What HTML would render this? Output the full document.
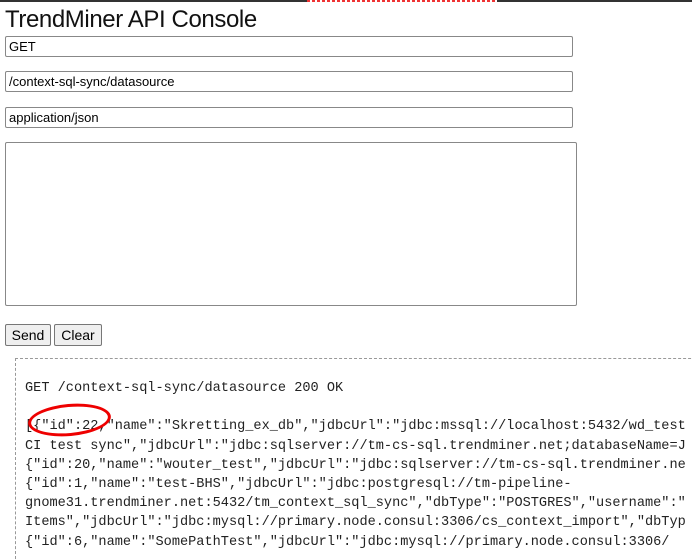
<!DOCTYPE html>
<html><head><style>
body{margin:0;width:692px;height:534px;overflow:hidden;background:#fff;font-family:"Liberation Sans",sans-serif;position:relative}
.bar{position:absolute;left:0;top:0;width:692px;height:2px;background:#333}
.red{position:absolute;left:307px;top:0;width:190px;height:2px;background:repeating-linear-gradient(90deg,#e33 0 3px,#fff 3px 5px)}
h1{position:absolute;left:5px;top:6px;margin:0;font-size:24px;font-weight:normal;color:#111;letter-spacing:-0.4px}
.in{position:absolute;left:5px;width:563px;height:19px;border:1px solid #888;border-radius:2px;font-size:13px;line-height:19px;padding-left:3px;box-sizing:content-box;color:#000}
.ta{position:absolute;left:5px;top:142px;width:570px;height:162px;border:1px solid #888;border-radius:2px}
.btn{position:absolute;top:324px;height:20px;border:1px solid #777;border-radius:2px;background:#efefef;font-size:14px;line-height:20px;text-align:center}
.out{position:absolute;left:15px;top:358px;width:700px;height:200px;border-left:1px dashed #999;border-top:1px dashed #999}
pre{position:absolute;left:25px;top:379px;margin:0;font-family:"Liberation Mono",monospace;font-size:13.6px;line-height:19.2px;color:#222;white-space:pre}
.ell{position:absolute;left:28px;top:404px;width:77px;height:26px;border:3px solid #e00;border-radius:50%;transform:rotate(-5deg)}
</style></head><body>
<div class="bar"></div><div class="red"></div>
<h1>TrendMiner API Console</h1>
<div class="in" style="top:36px">GET</div>
<div class="in" style="top:71px">/context-sql-sync/datasource</div>
<div class="in" style="top:107px">application/json</div>
<div class="ta"></div>
<div class="btn" style="left:5px;width:44px">Send</div>
<div class="btn" style="left:54px;width:46px">Clear</div>
<div class="out"></div>
<pre>GET /context-sql-sync/datasource 200 OK

[{"id":22,"name":"Skretting_ex_db","jdbcUrl":"jdbc:mssql://localhost:5432/wd_test
CI test sync","jdbcUrl":"jdbc:sqlserver://tm-cs-sql.trendminer.net;databaseName=J
{"id":20,"name":"wouter_test","jdbcUrl":"jdbc:sqlserver://tm-cs-sql.trendminer.ne
{"id":1,"name":"test-BHS","jdbcUrl":"jdbc:postgresql://tm-pipeline-
gnome31.trendminer.net:5432/tm_context_sql_sync","dbType":"POSTGRES","username":"
Items","jdbcUrl":"jdbc:mysql://primary.node.consul:3306/cs_context_import","dbTyp
{"id":6,"name":"SomePathTest","jdbcUrl":"jdbc:mysql://primary.node.consul:3306/</pre>
<div class="ell"></div>
</body></html>
